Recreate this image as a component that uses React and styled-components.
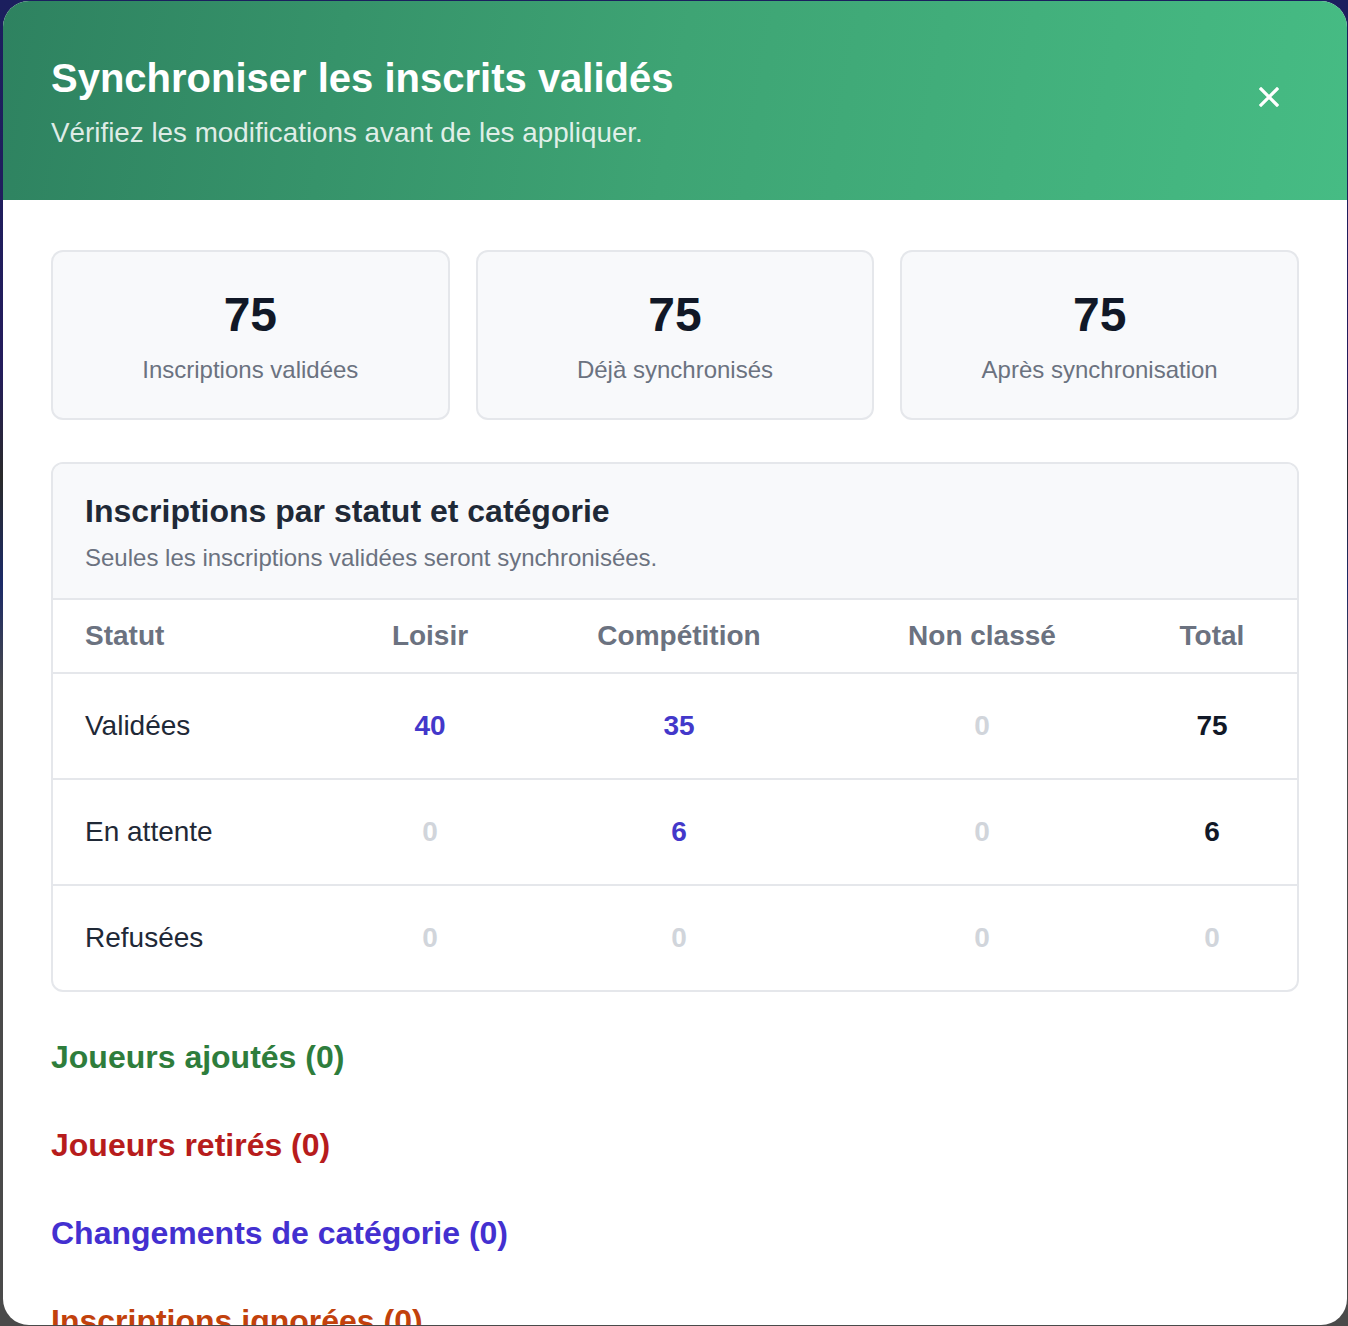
import React from "react";
import styled, { createGlobalStyle } from "styled-components";

const GlobalStyle = createGlobalStyle`
  html, body {
    margin: 0;
    padding: 0;
  }
  body {
    font-family: "Liberation Sans", Arial, sans-serif;
    background: #4a4a4a;
  }
`;

const Backdrop = styled.div`
  box-sizing: border-box;
  height: 100vh;
  padding: 1px 1px 1px 3px;
  background: linear-gradient(
    180deg,
    #1b1f5e 0%,
    #241d5c 28%,
    #2a2a2a 36%,
    #1b2a68 44%,
    #4a4a4a 52%,
    #4a4a4a 100%
  );
  overflow: hidden;
`;

const Modal = styled.div`
  height: 100%;
  background: #ffffff;
  border-radius: 26px;
  overflow: hidden;
  display: flex;
  flex-direction: column;
`;

const Header = styled.header`
  display: flex;
  align-items: center;
  justify-content: space-between;
  padding: 53px 58px 49px 48px;
  background: linear-gradient(100deg, #2e8260 0%, #3ea474 50%, #46bc84 100%);
  color: #ffffff;
  flex-shrink: 0;
`;

const HeaderText = styled.div`
  display: flex;
  flex-direction: column;
  gap: 13px;
`;

const Title = styled.h1`
  margin: 0;
  font-size: 40px;
  line-height: 48px;
  font-weight: 700;
`;

const Subtitle = styled.p`
  margin: 0;
  font-size: 27.8px;
  line-height: 36px;
  color: rgba(255, 255, 255, 0.85);
`;

const CloseButton = styled.button`
  width: 40px;
  height: 40px;
  margin-bottom: 12px;
  display: flex;
  align-items: center;
  justify-content: center;
  background: transparent;
  border: none;
  padding: 0;
  color: #ffffff;
  cursor: pointer;
`;

const Body = styled.div`
  padding: 50px 48px 0 48px;
`;

const Stats = styled.div`
  display: grid;
  grid-template-columns: repeat(3, 1fr);
  gap: 26px;
`;

const StatCard = styled.div`
  background: #f8f9fb;
  border: 2px solid #e5e7eb;
  border-radius: 12px;
  padding: 34px 24px 30px;
  text-align: center;
`;

const StatValue = styled.div`
  font-size: 48px;
  line-height: 58px;
  font-weight: 700;
  color: #111827;
`;

const StatLabel = styled.div`
  margin-top: 8px;
  font-size: 24px;
  line-height: 36px;
  color: #6b7280;
`;

const TableCard = styled.section`
  margin-top: 42px;
  border: 2px solid #e5e7eb;
  border-radius: 12px;
  overflow: hidden;
`;

const TableHead = styled.div`
  background: #f8f9fb;
  padding: 27px 32px 24px;
  border-bottom: 2px solid #e5e7eb;
`;

const TableTitle = styled.h2`
  margin: 0;
  font-size: 32px;
  line-height: 40px;
  font-weight: 700;
  color: #1f2937;
`;

const TableSubtitle = styled.p`
  margin: 11px 0 0;
  font-size: 24px;
  line-height: 32px;
  color: #6b7280;
`;

const Row = styled.div`
  display: grid;
  grid-template-columns: 286px 182px 316px 290px 1fr;
  align-items: center;
  height: ${(p) => (p.$head ? "72px" : "104px")};
  border-bottom: ${(p) => (p.$last ? "none" : "2px solid #e5e7eb")};
`;

const HeadCell = styled.div`
  font-size: 28px;
  font-weight: 700;
  color: #6b7280;
  text-align: ${(p) => (p.$left ? "left" : "center")};
  padding-left: ${(p) => (p.$left ? "32px" : "0")};
`;

const LabelCell = styled.div`
  font-size: 28px;
  color: #1f2937;
  padding-left: 32px;
`;

const tones = {
  accent: "#4338ca",
  muted: "#d1d5db",
  total: "#111827",
};

const NumCell = styled.div`
  font-size: 28px;
  font-weight: 700;
  text-align: center;
  color: ${(p) => tones[p.$tone]};
`;

const Sections = styled.div`
  margin-top: 45px;
  display: flex;
  flex-direction: column;
  gap: 48px;
`;

const SectionTitle = styled.h3`
  margin: 0;
  font-size: 32px;
  line-height: 40px;
  font-weight: 700;
  color: ${(p) => p.$color};
`;

const stats = [
  { value: 75, label: "Inscriptions validées" },
  { value: 75, label: "Déjà synchronisés" },
  { value: 75, label: "Après synchronisation" },
];

const rows = [
  { label: "Validées", values: [40, 35, 0], total: 75 },
  { label: "En attente", values: [0, 6, 0], total: 6 },
  { label: "Refusées", values: [0, 0, 0], total: 0 },
];

const sections = [
  { title: "Joueurs ajoutés (0)", color: "#2e7d3c" },
  { title: "Joueurs retirés (0)", color: "#b71c1c" },
  { title: "Changements de catégorie (0)", color: "#4330d0" },
  { title: "Inscriptions ignorées (0)", color: "#c2410c" },
];

function CloseIcon() {
  return (
    <svg width="20" height="20" viewBox="0 0 20 20" fill="none">
      <path
        d="M2 2 L18 18 M18 2 L2 18"
        stroke="currentColor"
        strokeWidth="3.2"
        strokeLinecap="square"
      />
    </svg>
  );
}

export default function App() {
  return (
    <>
      <GlobalStyle />
      <Backdrop>
        <Modal>
          <Header>
            <HeaderText>
              <Title>Synchroniser les inscrits validés</Title>
              <Subtitle>Vérifiez les modifications avant de les appliquer.</Subtitle>
            </HeaderText>
            <CloseButton aria-label="Fermer">
              <CloseIcon />
            </CloseButton>
          </Header>
          <Body>
            <Stats>
              {stats.map((s) => (
                <StatCard key={s.label}>
                  <StatValue>{s.value}</StatValue>
                  <StatLabel>{s.label}</StatLabel>
                </StatCard>
              ))}
            </Stats>

            <TableCard>
              <TableHead>
                <TableTitle>Inscriptions par statut et catégorie</TableTitle>
                <TableSubtitle>
                  Seules les inscriptions validées seront synchronisées.
                </TableSubtitle>
              </TableHead>
              <Row $head>
                <HeadCell $left>Statut</HeadCell>
                <HeadCell>Loisir</HeadCell>
                <HeadCell>Compétition</HeadCell>
                <HeadCell>Non classé</HeadCell>
                <HeadCell>Total</HeadCell>
              </Row>
              {rows.map((r, i) => (
                <Row key={r.label} $last={i === rows.length - 1}>
                  <LabelCell>{r.label}</LabelCell>
                  {r.values.map((v, j) => (
                    <NumCell key={j} $tone={v ? "accent" : "muted"}>
                      {v}
                    </NumCell>
                  ))}
                  <NumCell $tone={r.total ? "total" : "muted"}>{r.total}</NumCell>
                </Row>
              ))}
            </TableCard>

            <Sections>
              {sections.map((s) => (
                <SectionTitle key={s.title} $color={s.color}>
                  {s.title}
                </SectionTitle>
              ))}
            </Sections>
          </Body>
        </Modal>
      </Backdrop>
    </>
  );
}
